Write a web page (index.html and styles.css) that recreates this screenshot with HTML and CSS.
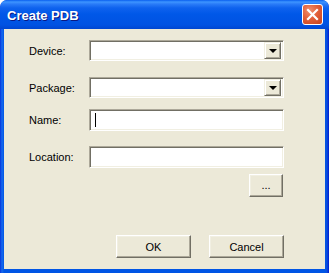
FILE: index.html
```html
<!DOCTYPE html>
<html>
<head>
<meta charset="utf-8">
<link rel="stylesheet" href="styles.css">
</head>
<body>
<div class="window">
  <div class="titlebar">
    <span class="title">Create PDB</span>
    <span class="close">
      <svg width="13" height="13" viewBox="0 0 13 13"><path d="M2 2 L11 11 M11 2 L2 11" stroke="#fff" stroke-width="2.2" stroke-linecap="square"/></svg>
    </span>
  </div>
  <div class="body">
    <div class="row r1">
      <label class="lbl">Device:</label>
      <div class="field combo"><span class="drop"><span class="arrow"></span></span></div>
    </div>
    <div class="row r2">
      <label class="lbl">Package:</label>
      <div class="field combo"><span class="drop"><span class="arrow"></span></span></div>
    </div>
    <div class="row r3">
      <label class="lbl">Name:</label>
      <div class="field text"><span class="caret"></span></div>
    </div>
    <div class="row r4">
      <label class="lbl">Location:</label>
      <div class="field text"></div>
    </div>
    <div class="browse-row">
      <div class="btn browse">...</div>
    </div>
    <div class="actions">
      <div class="btn action">OK</div>
      <div class="btn action">Cancel</div>
    </div>
  </div>
</div>
</body>
</html>
```

FILE: styles.css
```css
* { box-sizing: border-box; }
html, body { margin: 0; padding: 0; background: #fff; }
body { width: 329px; height: 273px; overflow: hidden; font-family: "Liberation Sans", Arial, sans-serif; font-size: 11px; color: #000; }

.window {
  width: 329px; height: 273px;
  display: flex; flex-direction: column;
  border-radius: 7px 7px 0 0;
  background: linear-gradient(90deg, #0831D9 0, #0D4FE6 1px, #166AEE 2px, #0055E5 4px, #0055E5 325px, #0A4DDD 327px, #0019CF 329px);
  overflow: hidden;
}

.titlebar {
  height: 29px; flex: none;
  display: flex; align-items: center; justify-content: space-between;
  padding: 0 6px 0 7px;
  border-radius: 7px 7px 0 0;
  background: linear-gradient(180deg, #0A5FEF 0, #3D95FF 2px, #2A7CF8 4px, #0E62EE 8px, #0058E8 14px, #0055E5 20px, #0052E2 25px, #0046D0 29px);
}
.title {
  color: #fff; font-weight: bold; font-size: 13px;
  text-shadow: 1px 1px 0 #0A1883;
  padding-top: 1px;
}
.close {
  width: 21px; height: 21px;
  display: flex; align-items: center; justify-content: center;
  border: 1px solid #fff; border-radius: 3px;
  background: radial-gradient(circle at 35% 30%, #F0906F 0, #E2603A 45%, #C7421C 100%);
}

.body {
  flex: 1;
  margin: 0 4px 4px 4px;
  background: #ECE9D8;
  padding: 11px 41px 0 25px;
  display: flex; flex-direction: column;
}

.row { display: flex; align-items: center; }
.r2 { margin-top: 16px; }
.r3 { margin-top: 11px; }
.r4 { margin-top: 15px; }
.lbl { width: 60px; flex: none; }

.field {
  flex: 1; height: 21px;
  background: #fff;
  border-top: 1px solid #ACA899; border-left: 1px solid #ACA899;
  border-right: 1px solid #fff; border-bottom: 1px solid #fff;
  box-shadow: inset 1px 1px 0 #716F64, inset -1px -1px 0 #F1EFE2;
  display: flex; align-items: center; justify-content: flex-end;
  width: 194px;
}
.text { height: 22px; justify-content: flex-start; }
.caret { width: 1px; height: 14px; background: #000; margin-left: 5px; }

.drop {
  width: 17px; height: 17px; margin-right: 2px;
  background: #ECE9D8;
  border-top: 1px solid #F1EFE2; border-left: 1px solid #F1EFE2;
  border-right: 1px solid #716F64; border-bottom: 1px solid #716F64;
  box-shadow: inset 1px 1px 0 #fff, inset -1px -1px 0 #ACA899;
  display: flex; align-items: center; justify-content: center;
}
.arrow {
  width: 0; height: 0;
  border-left: 4px solid transparent; border-right: 4px solid transparent;
  border-top: 4px solid #000;
  margin-top: 1px;
}

.btn {
  background: #ECE9D8;
  border-top: 1px solid #fff; border-left: 1px solid #fff;
  border-right: 1px solid #716F64; border-bottom: 1px solid #716F64;
  box-shadow: inset -1px -1px 0 #ACA899, inset 1px 1px 0 #F1EFE2;
  display: flex; align-items: center; justify-content: center;
}
.browse-row { display: flex; justify-content: flex-end; margin-top: 6px; padding-right: 1px; }
.browse { width: 34px; height: 23px; padding-bottom: 2px; }

.actions { display: flex; justify-content: flex-end; gap: 18px; margin-top: 38px; }
.action { width: 75px; height: 23px; }
```
